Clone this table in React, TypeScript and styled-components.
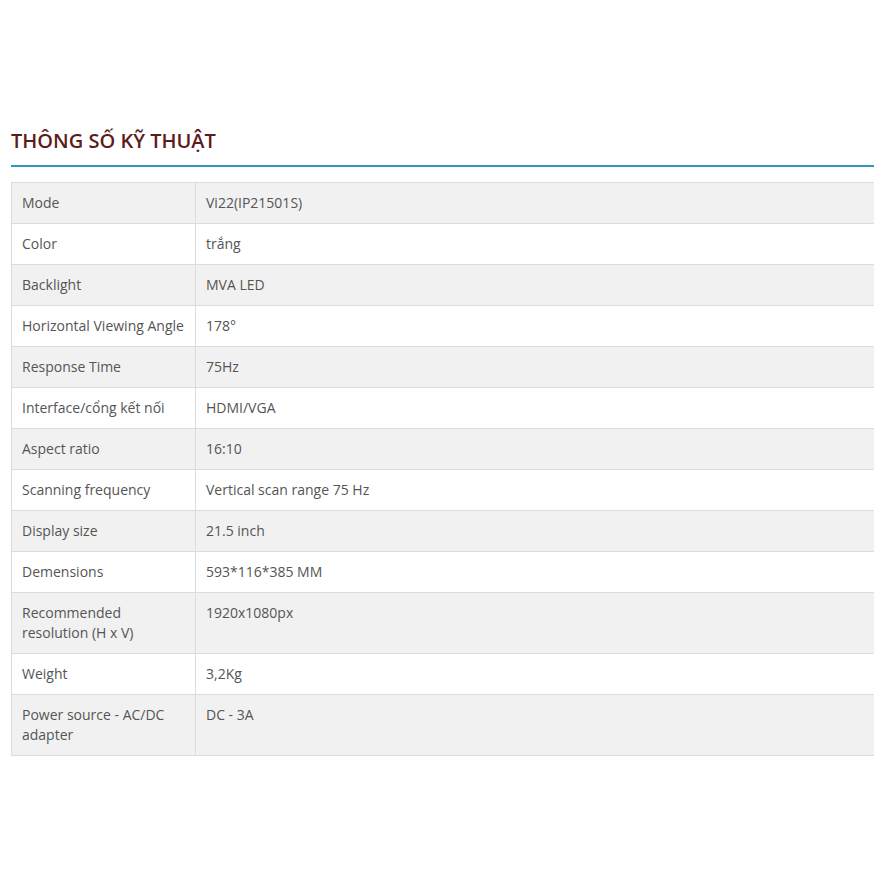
import React from "react";
import styled, { createGlobalStyle } from "styled-components";

const GlobalStyle = createGlobalStyle`
  body {
    margin: 0;
    background: #fff;
    font-family: "Open Sans", "Noto Sans", sans-serif;
  }
`;

const specs: [string, string][] = [
  ["Mode", "Vi22(IP21501S)"],
  ["Color", "trắng"],
  ["Backlight", "MVA LED"],
  ["Horizontal Viewing Angle", "178°"],
  ["Response Time", "75Hz"],
  ["Interface/cổng kết nối", "HDMI/VGA"],
  ["Aspect ratio", "16:10"],
  ["Scanning frequency", "Vertical scan range 75 Hz"],
  ["Display size", "21.5 inch"],
  ["Demensions", "593*116*385 MM"],
  ["Recommended resolution (H x V)", "1920x1080px"],
  ["Weight", "3,2Kg"],
  ["Power source - AC/DC adapter", "DC - 3A"],
];

export default function App() {
  return (
    <Page>
      <GlobalStyle />
      <Title>THÔNG SỐ KỸ THUẬT</Title>
      <Divider />
      <SpecTable>
        <tbody>
          {specs.map(([label, value], i) => (
            <Row key={label} $odd={i % 2 === 0}>
              <Label>{label}</Label>
              <Value>{value}</Value>
            </Row>
          ))}
        </tbody>
      </SpecTable>
    </Page>
  );
}

const Page = styled.div`
  width: 874px;
  height: 874px;
  overflow: hidden;
  padding: 127px 0 0 11px;
  box-sizing: border-box;
`;

const Title = styled.h2`
  margin: 0;
  font-size: 20px;
  line-height: 28px;
  font-weight: 600;
  color: #5e1b1b;
`;

const Divider = styled.div`
  margin-top: 10px;
  height: 0;
  border-top: 2px solid #2f97c6;
`;

const SpecTable = styled.table`
  margin-top: 15px;
  width: 900px;
  border-collapse: collapse;
  font-size: 14px;
  line-height: 20px;
  color: #555;
`;

const Row = styled.tr<{ $odd: boolean }>`
  background: ${(p) => (p.$odd ? "#f1f1f1" : "#fff")};
`;

const Label = styled.td`
  width: 163px;
  padding: 10px;
  border: 1px solid #dcdcdc;
  vertical-align: top;
`;

const Value = styled.td`
  padding: 10px;
  border: 1px solid #dcdcdc;
  vertical-align: top;
`;
